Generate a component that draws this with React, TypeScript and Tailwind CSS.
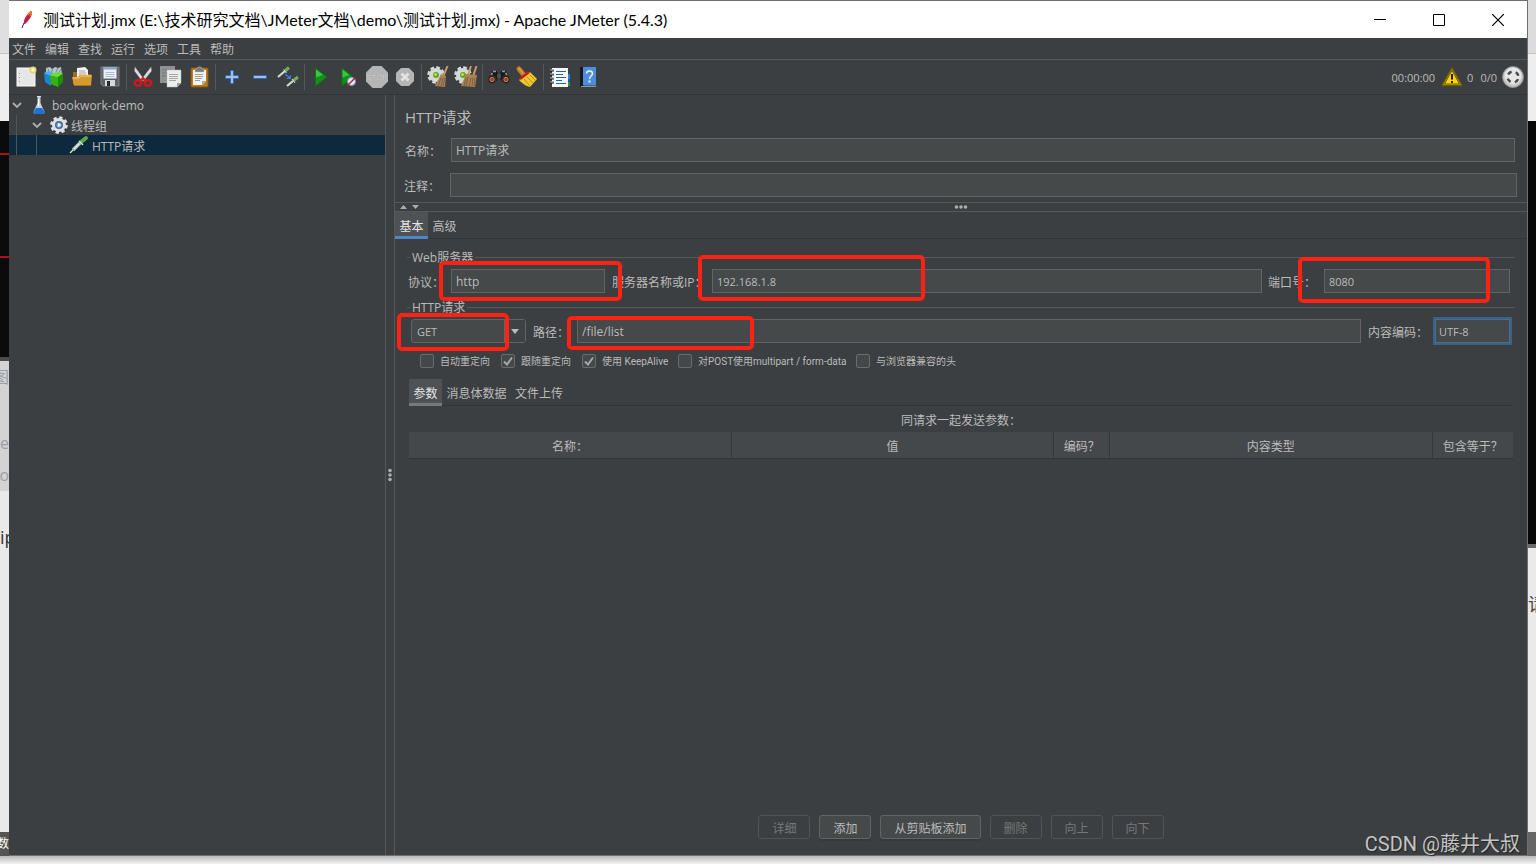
import { useState } from 'react';
import type { ReactNode } from 'react';

const menus = ['文件', '编辑', '查找', '运行', '选项', '工具', '帮助'];

const NewIcon = () => (
  <svg width="22" height="22" viewBox="0 0 22 22">
    <rect x="2" y="2" width="18" height="18" fill="#e6e6e6" stroke="#fafafa" />
    <path d="M4.500 7v1M4.500 11v1M4.500 15v1" stroke="#999" />
    <circle cx="18" cy="4" r="3.500" fill="#e3d56a" />
    <circle cx="18" cy="4" r="1.800" fill="#fffbd0" />
  </svg>
);

const TemplatesIcon = () => (
  <svg width="22" height="22" viewBox="0 0 22 22">
    <path d="M3 2l4-1 2 2 3-2 3 1 3-1 1 8-9 3-7-4z" fill="#b9c4cb" />
    <path d="M5 3l2 5M10 2l-2 6M15 2l-3 6M18 3l-3 5" stroke="#6e8592" />
    <path d="M1 7l7 2v11l-6-4z" fill="#1987c9" />
    <path d="M1 7l4-2 6 2-3 3z" fill="#4ab4ea" />
    <path d="M7 9l8 2v10l-7-3z" fill="#35b411" />
    <path d="M15 11l5-4v9l-5 5z" fill="#1f8c05" />
    <path d="M7 9l6-3 7 1-5 4z" fill="#71db3c" />
  </svg>
);

const OpenIcon = () => (
  <svg width="22" height="22" viewBox="0 0 22 22">
    <path d="M2 6h5l1 2h12v10H2z" fill="#9c6b12" />
    <path d="M6 2l8-1 3 3v8H6z" fill="#f1f1f1" />
    <path d="M8 5h6M8 7h7M8 9h7" stroke="#a6a6a6" />
    <path d="M1 11h6l2-2h12l-1 11H3z" fill="#d39a30" />
    <path d="M2 12h6l2-2h10" stroke="#f6cf72" fill="none" />
    <path d="M3 19.500h17" stroke="#a87210" />
  </svg>
);

const SaveIcon = () => (
  <svg width="22" height="22" viewBox="0 0 22 22">
    <path d="M2 1h18v19H4l-2-2z" fill="#5d6267" stroke="#7b8085" />
    <rect x="4.500" y="1.500" width="13" height="11" fill="#edf1f5" />
    <path d="M4.500 2.500h13" stroke="#7fa4cf" strokeWidth="2" />
    <path d="M6.500 6.500h9M6.500 8.500h9M6.500 10.500h9" stroke="#a9bfd6" />
    <rect x="6" y="14" width="10" height="6" fill="#d5d7d8" />
    <rect x="8" y="15" width="3" height="5" fill="#26282a" />
  </svg>
);

const CutIcon = () => (
  <svg width="22" height="22" viewBox="0 0 22 22">
    <path d="M3 1l9.500 13-2.500 1L2.500 5zM19 1L9 14l2.500 1L19.500 5z" fill="#dfe2e2" stroke="#8d9292" strokeWidth=".5" />
    <ellipse cx="6" cy="17" rx="3.300" ry="2.800" fill="none" stroke="#d01818" strokeWidth="2.500" />
    <ellipse cx="16" cy="17" rx="3.300" ry="2.800" fill="none" stroke="#d01818" strokeWidth="2.500" />
    <path d="M8 15l3-3 3 3" stroke="#d82020" strokeWidth="2" fill="none" />
  </svg>
);

const CopyIcon = () => (
  <svg width="22" height="22" viewBox="0 0 22 22">
    <path d="M0 0h15v17H0z" fill="#8f9293" />
    <path d="M2 4h10M2 7h10M2 10h10" stroke="#75797b" />
    <path d="M7 4h14v13l-4 4H7z" fill="#ececeb" stroke="#bdbdbd" strokeWidth=".5" />
    <path d="M9 8.500h9M9 10.500h9M9 12.500h9M9 14.500h7" stroke="#a8a8a8" />
    <path d="M17 21v-4h4z" fill="#9e9e9e" />
  </svg>
);

const PasteIcon = () => (
  <svg width="22" height="22" viewBox="0 0 22 22">
    <rect x="3" y="2" width="17" height="19" rx="1" fill="#bd7c1b" stroke="#8b5608" />
    <path d="M5 4h13v11l-4 4H5z" fill="#f3f3f3" />
    <path d="M14 19v-4h4z" fill="#aaa" />
    <path d="M7 8.500h8M7 10.500h8M7 12.500h7M7 14.500h5" stroke="#9f9f9f" />
    <path d="M7 3h2l1-2h3l1 2h2v3H7z" fill="#77797a" stroke="#c3c5c6" strokeWidth=".5" />
  </svg>
);

const PlusIcon = () => (
  <svg width="22" height="22" viewBox="0 0 22 22">
    <path d="M9.500 4.500h3v5h5v3h-5v5h-3v-5h-5v-3h5z" fill="#9cc2f5" stroke="#2b63bb" strokeWidth=".8" />
  </svg>
);

const MinusIcon = () => (
  <svg width="22" height="22" viewBox="0 0 22 22">
    <rect x="4.500" y="9.500" width="13" height="3" fill="#9cc2f5" stroke="#2b63bb" strokeWidth=".8" />
  </svg>
);

const ToggleIcon = () => (
  <svg width="22" height="22" viewBox="0 0 22 22">
    <path d="M1 11l7-6" stroke="#d3dad3" strokeWidth="2.200" />
    <path d="M8 5l4-3.500" stroke="#6fae60" strokeWidth="3" />
    <path d="M6.500 3.500l3 3.500" stroke="#d9ead4" />
    <path d="M10 20l6-5" stroke="#d3dad3" strokeWidth="2.200" />
    <path d="M16 15l5-4" stroke="#6fae60" strokeWidth="3" />
    <path d="M15 13l3 4" stroke="#d9ead4" />
    <path d="M8 8l5 4" stroke="#3a7be8" strokeWidth="1.500" />
    <path d="M14 9v4h-5z" fill="#3a7be8" />
  </svg>
);

const PlayIcon = () => (
  <svg width="22" height="22" viewBox="0 0 22 22">
    <path d="M5.500 2v18L17 11z" fill="#12901a" stroke="#0a7410" />
    <path d="M6 3.500v8l7-2.500z" fill="#3fc243" />
  </svg>
);

const PlayNoPauseIcon = () => (
  <svg width="22" height="22" viewBox="0 0 22 22">
    <path d="M4 2v18L15 11z" fill="#12901a" stroke="#0a7410" />
    <path d="M4.500 3.500v8l7-2.500z" fill="#3fc243" />
    <circle cx="13.500" cy="15.500" r="4" fill="#dfe8f7" stroke="#6d94cf" />
    <path d="M9.500 19.500l8-8" stroke="#cf1e1e" strokeWidth="1.500" />
  </svg>
);

const StopIcon = () => (
  <svg width="24" height="24" viewBox="0 0 24 24">
    <path d="M7.500 1h9L23 7.500v9L16.500 23h-9L1 16.500v-9z" fill="#b5b5b5" />
    <text x="12" y="15" textAnchor="middle" fontSize="8" fontWeight="bold" fontFamily="Liberation Sans" fill="#8d8d8d">STOP</text>
    <text x="12" y="15" textAnchor="middle" fontSize="8" fontFamily="Liberation Sans" fill="#d9d9d9">STOP</text>
  </svg>
);

const ShutdownIcon = () => (
  <svg width="22" height="22" viewBox="0 0 22 22">
    <path d="M7 2h8l5 5v8l-5 5H7l-5-5V7z" fill="#b5b5b5" />
    <path d="M7.500 7.500l7 7M14.500 7.500l-7 7" stroke="#e2e2e2" strokeWidth="3" />
  </svg>
);

const Gear = () => (
  <>
    <circle cx="9" cy="9" r="7.500" fill="none" stroke="#d5d9d5" strokeWidth="2.500" strokeDasharray="3.700 2.190" />
    <circle cx="9" cy="9" r="7" fill="#d5d9d5" />
    <circle cx="9" cy="9" r="3" fill="#6aa51d" />
    <circle cx="8.500" cy="8.500" r="1.300" fill="#c6e884" />
  </>
);

const ClearIcon = () => (
  <svg width="22" height="22" viewBox="0 0 22 22">
    <Gear />
    <path d="M20.500 0l-4 10" stroke="#c79a67" strokeWidth="2" />
    <path d="M14 8l5 2-1 11-10-1z" fill="#a98258" />
    <path d="M14 12l-3 8M16 12l-2 8M18 12l-2 8" stroke="#6f502f" strokeWidth=".7" />
  </svg>
);

const ClearAllIcon = () => (
  <svg width="24" height="22" viewBox="0 0 24 22">
    <Gear />
    <path d="M17 0l-3 9M22.500 0l-3 9" stroke="#c79a67" strokeWidth="2" />
    <path d="M12 8l11 1-2 12-14-1z" fill="#a98258" />
    <path d="M12 12l-2 8M14 11l-2 9M17 12l-2 8M19 12l-1 8M21 12l-1 8" stroke="#6f502f" strokeWidth=".7" />
  </svg>
);

const BinocularsIcon = () => (
  <svg width="24" height="22" viewBox="0 0 24 22">
    <path d="M5 5h5l1 3h2l1-3h5l3 6-1 5h-6l-2-4h-2l-2 4H3l-1-5z" fill="#1a1817" />
    <path d="M6 5.500h3M15 5.500h3M4 9l1.500-2M20 9l-1.500-2" stroke="#9a9a9a" strokeWidth="1.500" />
    <path d="M11 8v4M13 8v4" stroke="#77726e" strokeWidth="1.200" />
    <circle cx="5" cy="13.500" r="4" fill="#161414" stroke="#3e3a38" />
    <circle cx="19" cy="13.500" r="4" fill="#161414" stroke="#3e3a38" />
    <circle cx="5" cy="13.500" r="2.200" fill="#8a4628" stroke="#d88a60" strokeWidth=".9" />
    <circle cx="19" cy="13.500" r="2.200" fill="#8a4628" stroke="#d88a60" strokeWidth=".9" />
  </svg>
);

const BroomIcon = () => (
  <svg width="24" height="24" viewBox="0 0 24 24">
    <path d="M4 4l5 6" stroke="#c87e2b" strokeWidth="5" strokeLinecap="round" />
    <path d="M4 3l4 6" stroke="#e8b25c" strokeWidth="1" />
    <path d="M4 15L15 7l7 7-7 8c-5-1-8-4-11-7z" fill="#eec62b" />
    <path d="M5 14l9-7" stroke="#c51e1e" strokeWidth="2.500" />
    <path d="M9 14l6 7M12 12l6 6M15 10l5 5" stroke="#b38610" strokeWidth=".8" />
  </svg>
);

const FunctionListIcon = () => (
  <svg width="22" height="22" viewBox="0 0 22 22">
    <rect x="3" y="2" width="16" height="19" fill="#f6f8fa" />
    <path d="M20 8v5" stroke="#2d7fe0" strokeWidth="2" />
    <path d="M20 13v3" stroke="#1c57b8" strokeWidth="2" />
    <path d="M20 16v4" stroke="#27a01e" strokeWidth="2" />
    <path d="M7 5.500h10M7 8.500h7M7 11.500h10M7 14.500h6M7 17.500h10" stroke="#2563ad" strokeWidth="1.200" />
    <path d="M1 4.500h4M1 8.500h4M1 12.500h4M1 16.500h4" stroke="#111" strokeWidth="2" />
    <path d="M1 4h4M1 8h4M1 12h4M1 16h4" stroke="#fff" strokeWidth=".8" />
  </svg>
);

const HelpIcon = () => (
  <svg width="22" height="22" viewBox="0 0 22 22">
    <path d="M3 1h4v20H4l-1-1z" fill="#16191d" />
    <rect x="6" y="1" width="13" height="18.500" fill="#4d8ddb" />
    <path d="M4 20.500h15" stroke="#8d98a5" />
    <path d="M9.500 7.500c0-3.500 6-3.500 6 0 0 2.500-3 2.500-3 5.500" fill="none" stroke="#eef5ff" strokeWidth="1.500" />
    <rect x="11.500" y="14.500" width="2" height="2" fill="#eef5ff" />
  </svg>
);

const toolGroups: { label: string; icon: ReactNode }[][] = [
  [
    { label: '新建', icon: <NewIcon /> },
    { label: '模板', icon: <TemplatesIcon /> },
    { label: '打开', icon: <OpenIcon /> },
    { label: '保存', icon: <SaveIcon /> },
  ],
  [
    { label: '剪切', icon: <CutIcon /> },
    { label: '复制', icon: <CopyIcon /> },
    { label: '粘贴', icon: <PasteIcon /> },
  ],
  [
    { label: '展开', icon: <PlusIcon /> },
    { label: '折叠', icon: <MinusIcon /> },
    { label: '切换', icon: <ToggleIcon /> },
  ],
  [
    { label: '启动', icon: <PlayIcon /> },
    { label: '不停顿启动', icon: <PlayNoPauseIcon /> },
    { label: '停止', icon: <StopIcon /> },
    { label: '关闭', icon: <ShutdownIcon /> },
  ],
  [
    { label: '清除', icon: <ClearIcon /> },
    { label: '清除全部', icon: <ClearAllIcon /> },
  ],
  [
    { label: '查找', icon: <BinocularsIcon /> },
    { label: '重置搜索', icon: <BroomIcon /> },
  ],
  [
    { label: '函数助手', icon: <FunctionListIcon /> },
    { label: '帮助', icon: <HelpIcon /> },
  ],
];

const checkOptions = [
  { id: 'auto-redirect', label: '自动重定向', width: 'w-[81px]', checked: false },
  { id: 'follow-redirect', label: '跟随重定向', width: 'w-[81px]', checked: true },
  { id: 'keep-alive', label: '使用 KeepAlive', width: 'w-24', checked: true },
  { id: 'multipart', label: '对POST使用multipart / form-data', width: 'w-[178px]', checked: false },
  { id: 'browser-headers', label: '与浏览器兼容的头', width: 'w-28', checked: false },
];

const buttons = [
  { label: '详细', disabled: true },
  { label: '添加', disabled: false },
  { label: '从剪贴板添加', disabled: false },
  { label: '删除', disabled: true },
  { label: '向上', disabled: true },
  { label: '向下', disabled: true },
];

const inputClass = 'h-6 w-full border border-[#646464] bg-[#45494a] px-1 text-[#bbbbbb] outline-none';
const labelClass = 'shrink-0 whitespace-nowrap pt-[3px]';

// red marker drawn round a field
const Marker = ({ className }: { className: string }) => (
  <span className={`pointer-events-none absolute z-10 rounded-[5px] border-4 border-[#fd2213] ${className}`} />
);

const GroupTitle = ({ children }: { children: ReactNode }) => (
  <div className="flex h-3.5 items-center gap-0.5 pl-3 pr-3">
    <span className="h-px w-[3px] bg-[#555759]" />
    <h3 className="whitespace-nowrap pt-0.5">{children}</h3>
    <span className="h-px flex-1 bg-[#555759]" />
  </div>
);

const Chevron = () => (
  <svg width="10" height="6" viewBox="0 0 10 6">
    <path d="M1 1l4 4 4-4" fill="none" stroke="#adadad" strokeWidth="1.800" />
  </svg>
);

const TitleBar = () => (
  <header className="flex h-[37px] items-center bg-white text-black">
    <svg className="ml-2" width="20" height="22" viewBox="0 0 20 22">
      <path d="M5 19l2-5" stroke="#46204a" strokeWidth="1" />
      <path d="M7 15c-1-4 2-9 7-13 2 1 1 7-6 13z" fill="#cf2340" />
      <path d="M10 6c1-2 3-4 4-4 2 1 1 3 0 5z" fill="#ef7b25" />
      <path d="M7 15l6-10" stroke="#7a1d58" strokeWidth=".7" />
    </svg>
    <h1 className="ml-1.5 flex-1 whitespace-nowrap font-['Lato','Noto_Sans_CJK_SC',sans-serif] text-base leading-none">
      测试计划.jmx (E:\技术研究文档\JMeter文档\demo\测试计划.jmx) - Apache JMeter (5.4.3)
    </h1>
    <button aria-label="最小化" className="flex w-[59px] justify-center">
      <svg width="12" height="12" viewBox="0 0 12 12"><path d="M0 5.500h12" stroke="#000" /></svg>
    </button>
    <button aria-label="最大化" className="flex w-[59px] justify-center">
      <svg width="12" height="12" viewBox="0 0 12 12"><path d="M.5.5h11v11H.5z" fill="none" stroke="#000" /></svg>
    </button>
    <button aria-label="关闭" className="flex w-[59px] justify-center">
      <svg width="12" height="12" viewBox="0 0 12 12"><path d="M0 0l12 12M12 0L0 12" stroke="#000" strokeWidth="1.200" /></svg>
    </button>
  </header>
);

const Toolbar = () => (
  <div className="flex h-[35px] items-center border-b border-[#323436] pl-[3px]">
    {toolGroups.map((group, idx) => (
      <div key={idx} className="flex items-center">
        {idx > 0 && <span className="mx-0.5 h-[26px] w-px bg-[#55585a]" />}
        {group.map((tool) => (
          <button key={tool.label} aria-label={tool.label} className="flex h-7 w-7 items-center justify-center">
            {tool.icon}
          </button>
        ))}
      </div>
    ))}
    <div className="ml-auto flex items-center pr-0.5 text-[11px]">
      <span>00:00:00</span>
      <svg className="ml-1.5 mr-1" width="22" height="20" viewBox="0 0 22 20">
        <path d="M11 1L21 18.500H1z" fill="#ffd500" stroke="#6b5a08" strokeWidth="1.500" strokeLinejoin="round" />
        <path d="M11 3.500L18.500 17h-15z" fill="none" stroke="#2b2604" strokeWidth=".7" />
        <path d="M11 7v5.500M11 14v2" stroke="#1d1a05" strokeWidth="2" />
      </svg>
      <span>0</span>
      <span className="ml-[7px]">0/0</span>
      <svg className="ml-1" width="24" height="24" viewBox="0 0 24 24">
        <circle cx="12" cy="12" r="10.500" fill="#c6c6c6" stroke="#8c8c8c" />
        <circle cx="12" cy="11" r="8.500" fill="#e6e6e6" />
        <circle cx="12" cy="12" r="5.500" fill="none" stroke="#4a4a4a" strokeWidth="2.500" strokeDasharray="4.300 4.340" strokeDashoffset="-2.200" />
      </svg>
    </div>
  </div>
);

const TestTree = () => (
  <nav className="w-[377px] shrink-0 border-r border-[#555759]">
    <ul>
      <li className="flex h-5 items-center pl-[3px]">
        <Chevron />
        <svg className="ml-2" width="18" height="20" viewBox="0 0 18 20">
          <path d="M7.500 2h3v6l4 9c0 1-1 2-2 2h-7c-1 0-2-1-2-2l4-9z" fill="#c3d3e2" />
          <path d="M6 13h6l2.500 4c0 1-1 2-2 2h-7c-1 0-2-1-2-2z" fill="#1b74d2" />
          <path d="M8.500 4v7" stroke="#fff" />
          <path d="M7 1.500h4" stroke="#d6dde3" />
        </svg>
        <span className="ml-1 pt-0.5">bookwork-demo</span>
      </li>
      <li className="flex h-5 items-center">
        <span className="ml-[7px] h-5 w-px bg-[#515456]" />
        <span className="ml-[15px]"><Chevron /></span>
        <svg className="ml-[7px]" width="20" height="20" viewBox="0 0 20 20">
          <circle cx="10" cy="10" r="7.300" fill="none" stroke="#dfe1e4" strokeWidth="3" strokeDasharray="3.200 2.530" />
          <circle cx="10" cy="10" r="7" fill="#dfe1e4" />
          <circle cx="10" cy="10" r="4" fill="#3f689f" />
          <circle cx="10" cy="10" r="2.500" fill="#8fb0dc" />
          <path d="M9 8l3 2-3 2z" fill="#fff" />
        </svg>
        <span className="ml-0.5 pt-[3px]">线程组</span>
      </li>
      <li className="flex h-5 items-center bg-[#0d293e]">
        <span className="ml-[7px] h-5 w-px bg-[#515456]" />
        <span className="ml-[19px] h-5 w-px bg-[#515456]" />
        <svg className="ml-8" width="20" height="20" viewBox="0 0 20 20">
          <path d="M1 18l4-4" stroke="#dfe6e2" strokeWidth="1.200" />
          <path d="M4 15l7-7" stroke="#aebbb4" strokeWidth="3.500" />
          <path d="M5 14l6-6" stroke="#eef4f1" strokeWidth="1.200" />
          <path d="M12 7l5-4" stroke="#5ea64c" strokeWidth="4" strokeLinecap="round" />
          <path d="M10 6l4 4" stroke="#d8ead3" strokeWidth="1.200" />
        </svg>
        <span className="ml-[3px] pt-[3px]">HTTP请求</span>
      </li>
    </ul>
  </nav>
);

const HttpRequestPanel = () => {
  const [checks, setChecks] = useState<Record<string, boolean>>(
    Object.fromEntries(checkOptions.map((option) => [option.id, option.checked]))
  );

  return (
    <main className="flex min-w-0 flex-1 flex-col border-l border-[#555759]">
      <div className="border-b border-[#555759] pb-[5px]">
        <h2 className="flex h-[43px] items-center pl-2.5 pt-0.5 text-[15px]">HTTP请求</h2>
        <div className="flex items-center pl-2.5 pr-3">
          <label htmlFor="name" className={`w-[46px] ${labelClass}`}>名称：</label>
          <input id="name" className={inputClass} defaultValue="HTTP请求" />
        </div>
        <div className="mt-[11px] flex items-center pl-[9px] pr-2.5">
          <label htmlFor="comment" className={`w-[46px] ${labelClass}`}>注释：</label>
          <input id="comment" className={inputClass} />
        </div>
      </div>

      <div className="flex h-[9px] items-center justify-between border-b border-[#555759] px-1">
        <svg width="22" height="6" viewBox="0 0 22 6">
          <path d="M1 5l3.500-4L8 5zM13 1l3.500 4L20 1z" fill="#adadad" />
        </svg>
        <svg width="14" height="4" viewBox="0 0 14 4">
          <circle cx="2.500" cy="2" r="1.800" fill="#adadad" />
          <circle cx="7" cy="2" r="1.800" fill="#adadad" />
          <circle cx="11.500" cy="2" r="1.800" fill="#adadad" />
        </svg>
        <span className="w-[22px]" />
      </div>

      <div role="tablist" className="flex h-[27px] border-b border-[#323436]">
        <button role="tab" aria-selected="true" className="-mb-px w-[33px] border-b-[3px] border-[#4a88c7] bg-[#4e5254] pt-1.5 text-[#e6e6e6]">基本</button>
        <button role="tab" aria-selected="false" className="w-[33px] pt-1">高级</button>
      </div>

      <section className="pt-[11px]">
        <GroupTitle>Web服务器</GroupTitle>
        <div className="mt-[5px] flex items-center pl-[13px] pr-[17px]">
          <label htmlFor="protocol" className={`w-[43px] ${labelClass}`}>协议：</label>
          <div className="relative w-[154px] shrink-0">
            <input id="protocol" className={inputClass} defaultValue="http" />
            <Marker className="-left-3 -top-2 h-10 w-[183px]" />
          </div>
          <label htmlFor="server" className={`ml-[7px] w-[100px] ${labelClass}`}>服务器名称或IP：</label>
          <div className="relative flex-1">
            <input id="server" className={`${inputClass} text-[11px]`} defaultValue="192.168.1.8" />
            <Marker className="-left-3.5 -top-3.5 h-[46px] w-[227px]" />
          </div>
          <label htmlFor="port" className={`ml-1.5 w-14 ${labelClass}`}>端口号：</label>
          <div className="relative w-[186px] shrink-0">
            <input id="port" className={`${inputClass} text-[11px]`} defaultValue="8080" />
            <Marker className="-left-[26px] -top-3 h-[46px] w-48" />
          </div>
        </div>
      </section>

      <section className="pt-[7px]">
        <GroupTitle>HTTP请求</GroupTitle>
        <div className="mt-[5px] flex items-center pl-4 pr-[17px]">
          <div className="relative w-[115px] shrink-0">
            <select aria-label="方法" className="h-6 w-full appearance-none rounded-[3px] border border-[#646464] bg-[#45494a] pl-[5px] text-[11px] outline-none">
              <option>GET</option>
              <option>POST</option>
            </select>
            <span className="pointer-events-none absolute right-px top-px flex h-[22px] w-[21px] items-center justify-center border-l border-[#646464] bg-[#3e4244]">
              <svg width="8" height="5" viewBox="0 0 8 5"><path d="M0 0h8L4 5z" fill="#bbb" /></svg>
            </span>
            <Marker className="-left-3.5 -top-1.5 h-[38px] w-28" />
          </div>
          <label htmlFor="path" className={`ml-[7px] w-11 ${labelClass}`}>路径：</label>
          <div className="relative flex-1">
            <input id="path" className={inputClass} defaultValue="/file/list" />
            <Marker className="-left-2.5 -top-[3px] h-[34px] w-[187px]" />
          </div>
          <label htmlFor="encoding" className={`ml-[7px] w-[67px] ${labelClass}`}>内容编码：</label>
          <div className="w-[75px] shrink-0">
            <input
              id="encoding"
              className="h-6 w-full border border-[#466d94] bg-[#45494a] px-[3px] text-[11px] outline-none ring-2 ring-[#3d6185]"
              defaultValue="UTF-8"
            />
          </div>
        </div>

        <div className="mt-[11px] flex h-3.5 items-center pl-[25px] font-['Roboto','Noto_Sans_CJK_SC',sans-serif] text-[10px]">
          {checkOptions.map((option) => (
            <label key={option.id} htmlFor={option.id} className={`flex shrink-0 items-center whitespace-nowrap ${option.width}`}>
              <span className="relative mr-1.5 h-3.5 w-3.5">
                <input
                  id={option.id}
                  type="checkbox"
                  checked={checks[option.id]}
                  onChange={(e) => setChecks({ ...checks, [option.id]: e.target.checked })}
                  className="block h-3.5 w-3.5 appearance-none rounded-[2px] border border-[#6b6b6b] bg-[#43494a]"
                />
                {checks[option.id] && (
                  <svg className="pointer-events-none absolute left-0 top-0" width="14" height="14" viewBox="0 0 14 14">
                    <path d="M3 7.500L6 10.500 11 3.500" fill="none" stroke="#a7a7a7" strokeWidth="2" />
                  </svg>
                )}
              </span>
              <span className="pt-0.5">{option.label}</span>
            </label>
          ))}
        </div>
      </section>

      <section className="mt-[11px] flex flex-1 flex-col pl-3.5 pr-3.5">
        <div role="tablist" className="flex h-[27px] border-b border-[#323436]">
          <button role="tab" aria-selected="true" className="-mb-px w-[33px] border-b-[3px] border-[#747a80] bg-[#4e5254] pt-1.5 text-[#e6e6e6]">参数</button>
          <button role="tab" aria-selected="false" className="w-[69px] pt-1">消息体数据</button>
          <button role="tab" aria-selected="false" className="w-14 pt-1">文件上传</button>
        </div>
        <p className="flex h-[26px] items-center justify-center pt-1">同请求一起发送参数：</p>
        <table className="w-full table-fixed border-collapse">
          <colgroup>
            <col />
            <col />
            <col className="w-14" />
            <col />
            <col className="w-[81px]" />
          </colgroup>
          <thead>
            <tr className="h-[26px] border-b border-[#323436] bg-[#45484a]">
              {['名称：', '值', '编码？', '内容类型', '包含等于？'].map((column) => (
                <th key={column} className="whitespace-nowrap border-r border-[#35383a] pt-1 font-normal last:border-r-0">{column}</th>
              ))}
            </tr>
          </thead>
        </table>
        <div className="mt-auto flex justify-center gap-[9px] pb-4">
          {buttons.map((button) => (
            <button
              key={button.label}
              disabled={button.disabled}
              className="h-6 rounded-[3px] border border-[#646464] bg-[#45494a] px-[13px] pt-[3px] shadow-[0_2px_0_#36393b] disabled:border-[#515354] disabled:bg-transparent disabled:text-[#777777] disabled:shadow-none"
            >
              {button.label}
            </button>
          ))}
        </div>
      </section>
    </main>
  );
};

// slices of the pages that lie behind the window
const LeftBackdrop = () => (
  <div aria-hidden="true" className="flex w-[9px] shrink-0 flex-col overflow-hidden bg-[#e9e9e9]">
    <div className="h-[54px] border-b border-[#c4c4c4] bg-[#dfdfdf]" />
    <div className="h-[67px] bg-[#eeeeee]" />
    <div className="h-8 bg-[#0b0b0b]" />
    <div className="h-[103px] border-t-2 border-[#b51010] bg-[#0b0b0b]" />
    <div className="h-[101px] border-t-2 border-[#b51010] bg-[#0b0b0b]" />
    <div className="h-1 bg-[#4b4b4b]" />
    <div className="flex h-[130px] flex-col items-end bg-[#d3d3d3] text-base text-[#9a9fa8]">
      <span className="mt-1">图</span>
      <span className="mt-[42px]">ge</span>
      <span className="mt-2">o</span>
    </div>
    <div className="mt-8 text-lg text-[#333333]">ip</div>
    <div className="mt-auto flex h-6 items-center justify-end bg-[#555555] text-white">数</div>
  </div>
);

const RightBackdrop = () => (
  <div aria-hidden="true" className="flex w-2 shrink-0 flex-col overflow-hidden bg-[#eaeaea]">
    <div className="h-[54px] border-b border-[#c4c4c4] bg-[#dcdcdc]" />
    <div className="h-[67px] bg-[#eeeeee]" />
    <div className="h-[423px] bg-[#080808]" />
    <div className="h-1 bg-[#6a6a6a]" />
    <div className="mt-[42px] text-lg text-[#444444]">请</div>
    <div className="mt-auto h-6 bg-[#666666]" />
  </div>
);

const App = () => {
  return (
    <div className="relative flex min-h-screen flex-col bg-[#e8e8e8] font-['Open_Sans','Noto_Sans_CJK_SC',sans-serif] text-xs leading-none text-[#bbbbbb]">
      <div className="flex flex-1">
        <LeftBackdrop />
        <div className="flex min-w-0 flex-1 flex-col border-b border-r border-t border-[#707070] bg-[#3c3f41]">
          <TitleBar />
          <ul className="flex h-[22px] items-center gap-[9px] border-b border-[#555759] pl-[3px] pt-0.5">
            {menus.map((menu) => (
              <li key={menu}>
                <button>{menu}</button>
              </li>
            ))}
          </ul>
          <Toolbar />
          <div className="flex flex-1">
            <TestTree />
            <div className="flex w-2 shrink-0 items-center justify-center">
              <svg width="4" height="14" viewBox="0 0 4 14">
                <circle cx="2" cy="2.500" r="1.800" fill="#adadad" />
                <circle cx="2" cy="7" r="1.800" fill="#adadad" />
                <circle cx="2" cy="11.500" r="1.800" fill="#adadad" />
              </svg>
            </div>
            <HttpRequestPanel />
          </div>
        </div>
        <RightBackdrop />
      </div>
      <div className="h-2 bg-gradient-to-b from-[#b9b9b9] to-[#f4f4f4]" />
      <p className="absolute bottom-2.5 right-4 font-['Roboto','Noto_Sans_CJK_SC',sans-serif] text-xl leading-none text-[#c4c4c4] [text-shadow:1px_1px_1px_#222]">
        CSDN @藤井大叔
      </p>
    </div>
  );
};

export default App;
